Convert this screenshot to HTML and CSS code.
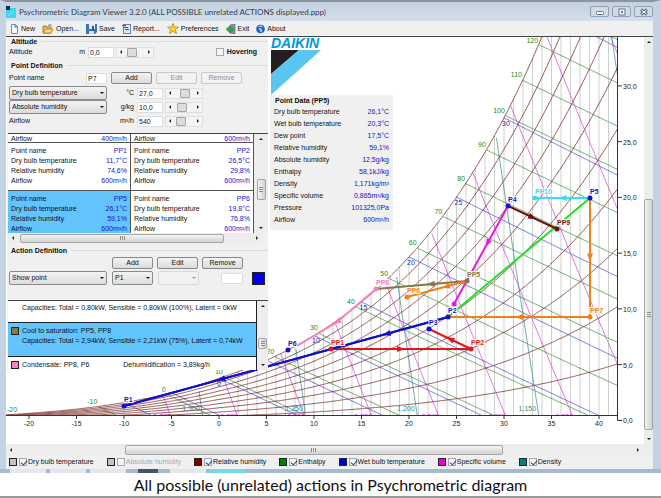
FILE: index.html
```html
<!DOCTYPE html>
<html lang="en">
<head>
  <meta charset="UTF-8">
  <meta name="viewport" content="width=device-width, initial-scale=1.0">
  <title>Psychrometric Diagram Viewer 3.2.0</title>
  <link rel="stylesheet" href="styles.css">
</head>
<body>
  <div class="window">
    <!-- Title bar -->
    <header class="titlebar">
      <svg class="app-icon" width="10" height="12" viewBox="0 0 10 12"><rect y="2" width="10" height="10" fill="#3cd8e8"/><rect width="4" height="4" fill="#0c2c4c"/><path d="M2 10L8 5" stroke="#8ef" /></svg>
      <h1>Psychrometric Diagram Viewer 3.2.0 (ALL POSSIBLE unrelated ACTIONS displayed.ppp)</h1>
      <div class="win-buttons">
        <button aria-label="Minimize"><svg width="8" height="8" viewBox="0 0 8 8"><rect x=".5" y="3.5" width="7" height="3" rx="1" fill="#fff" stroke="#67727e"/></svg></button>
        <button aria-label="Maximize"><svg width="8" height="8" viewBox="0 0 8 8"><rect x="1" y="1" width="6" height="6" fill="#fff" stroke="#67727e"/><rect x="3" y="3" width="2" height="2" fill="#67727e"/></svg></button>
        <button aria-label="Close"><svg width="8" height="8" viewBox="0 0 8 8"><path d="M1 1.500L7 6.500M7 1.500L1 6.500" stroke="#67727e" stroke-width="3"/><path d="M1.500 2L6.500 6M6.500 2L1.500 6" stroke="#fff"/></svg></button>
      </div>
    </header>

    <!-- Toolbar -->
    <nav class="toolbar">
      <button><svg width="9" height="10" viewBox="0 0 9 10"><path d="M1.500.5H5.500L7.500 2.500V9.500H1.500Z" fill="#fff" stroke="#7088b0"/><path d="M5 .5V3H8" fill="none" stroke="#48689c"/></svg>New</button>
      <button><svg width="12" height="10" viewBox="0 0 12 10"><path d="M1 9V2H4L5 3H9V9Z" fill="#e8b84c" stroke="#a8782c"/><path d="M1 9L4 5H11L9 9Z" fill="#fcdc7c" stroke="#b8883c"/><path d="M6 1.500Q8-.5 10 2" fill="none" stroke="#4c7cb4"/></svg>Open...</button>
      <button><svg width="11" height="10" viewBox="0 0 11 10"><path d="M0 0H3V5H9V0H11V8L9 10H0Z" fill="#3c74b4"/><rect x="3" y="0" width="5" height="5" fill="#e4eefa"/><rect x="3" y="7" width="5" height="3" fill="#cfe0f0"/><rect x="6" y="2" width="2" height="5" fill="#245890"/></svg>Save</button>
      <button><svg width="9" height="10" viewBox="0 0 9 10"><rect x="1.500" y=".5" width="7" height="9" fill="#dce8fa" stroke="#6c84ac"/><path d="M0 1.500H4M1.500 3.500H6M3 5.500H7" stroke="#34588c"/></svg>Report...</button>
      <button><svg width="12" height="11" viewBox="0 0 12 11"><path d="M6 .5L7.500 4L11.500 4.200L8.400 6.600L9.500 10.500L6 8.300L2.500 10.500L3.600 6.600L.5 4.200L4.500 4Z" fill="#fcd42c" stroke="#c48418" stroke-width=".8"/></svg>Preferences</button>
      <button><svg width="10" height="10" viewBox="0 0 10 10"><path d="M4 1L9 0V10L4 9Z" fill="#7c94a8" stroke="#4c6070" stroke-width=".6"/><path d="M0 5L4 2V4H7V7H4V9Z" fill="#38a848" stroke="#1c7830" stroke-width=".5"/></svg>Exit</button>
      <button><svg width="9" height="10" viewBox="0 0 9 10"><circle cx="4.500" cy="5" r="4" fill="#2468d0" stroke="#1c4c9c" stroke-width=".6"/><path d="M2 3Q4.500 0 7 3Z" fill="#a8ccf8"/><path d="M3 5H5V8" fill="none" stroke="#fff"/></svg>About</button>
    </nav>

    <main class="workspace">
      <svg class="chart" id="chart" viewBox="6 37 638 407" role="img" aria-label="Psychrometric chart"></svg>

      <div class="scroll-v">
        <span class="up"></span><span class="thumb"></span><span class="down"></span>
      </div>

      <!-- Left panel -->
      <aside class="panel">
        <h2>Altitude</h2>
        <div class="row altitude">
          <label for="altitude">Altitude</label>
          <span class="unit">m</span>
          <input type="text" id="altitude" class="num" value="0,0">
          <div class="slider"><input type="range" aria-label="Altitude slider" min="0" max="100" value="20"></div>
          <label class="hover"><input type="checkbox"> Hovering</label>
        </div>

        <h2>Point Definition</h2>
        <div class="row buttons">
          <label for="point-name">Point name</label>
          <input type="text" id="point-name" class="name" value="P7">
          <button>Add</button>
          <button disabled>Edit</button>
          <button disabled>Remove</button>
        </div>
        <div class="row">
          <span class="drop wide"><select aria-label="First property"><option>Dry bulb temperature</option></select></span>
          <label class="unit" for="dry">°C</label>
          <input type="text" id="dry" class="num" value="27,0">
          <div class="slider"><input type="range" aria-label="Temperature slider" min="0" max="100" value="62"></div>
        </div>
        <div class="row">
          <span class="drop wide"><select aria-label="Second property"><option>Absolute humidity</option></select></span>
          <label class="unit" for="abs">g/kg</label>
          <input type="text" id="abs" class="num" value="10,0">
          <div class="slider"><input type="range" aria-label="Humidity slider" min="0" max="100" value="30"></div>
        </div>
        <div class="row">
          <span class="wide">Airflow</span>
          <label class="unit" for="flow">m³/h</label>
          <input type="text" id="flow" class="num" value="540">
          <div class="slider"><input type="range" aria-label="Airflow slider" min="0" max="100" value="18"></div>
        </div>

        <div class="list points">
          <div class="cells">
            <div class="cell cut"><p>Airflow <b>400m³/h</b></p></div>
            <div class="cell cut"><p>Airflow <b>600m³/h</b></p></div>
            <div class="cell"><p>Point name <b>PP1</b></p><p>Dry bulb temperature <b>11,7°C</b></p><p>Relative humidity <b>74,6%</b></p><p>Airflow <b>600m³/h</b></p></div>
            <div class="cell"><p>Point name <b>PP2</b></p><p>Dry bulb temperature <b>26,5°C</b></p><p>Relative humidity <b>29,8%</b></p><p>Airflow <b>600m³/h</b></p></div>
            <div class="cell selected"><p>Point name <b>PP5</b></p><p>Dry bulb temperature <b>26,1°C</b></p><p>Relative humidity <b>59,1%</b></p><p>Airflow <b>600m³/h</b></p></div>
            <div class="cell"><p>Point name <b>PP6</b></p><p>Dry bulb temperature <b>19,8°C</b></p><p>Relative humidity <b>76,8%</b></p><p>Airflow <b>600m³/h</b></p></div>
          </div>
          <div class="scroll-v"><span class="up"></span><span class="thumb"></span><span class="down"></span></div>
        </div>
        <div class="scroll-h"><span class="left"></span><span class="thumb"></span><span class="right"></span></div>

        <h2>Action Definition</h2>
        <div class="row buttons actions">
          <button>Add</button>
          <button>Edit</button>
          <button>Remove</button>
        </div>
        <div class="row">
          <span class="drop wide"><select aria-label="Action"><option>Show point</option></select></span>
          <span class="drop short"><select aria-label="Point"><option>P1</option></select></span>
          <span class="drop short off"><select aria-label="Second point" disabled><option></option></select></span>
          <input type="text" class="blank" aria-label="Value">
          <button class="color" aria-label="Line colour"></button>
        </div>

        <div class="list steps">
          <div class="items">
            <div class="item first"><p>Capacities: Total = 0,80kW, Sensible = 0,80kW (100%), Latent = 0kW</p></div>
            <div class="item selected"><i class="olive"></i><p>Cool to saturation: PP5, PP8</p><p>Capacities: Total = 2,94kW, Sensible = 2,21kW (75%), Latent = 0,74kW</p></div>
            <div class="item last"><i class="pink"></i><p>Condensate: PP8, P6 <span>Dehumidification = 3,89kg/h</span></p></div>
          </div>
          <div class="scroll-v"><span class="up"></span><span class="thumb"></span><span class="down"></span></div>
        </div>
      </aside>

      <!-- Logo and point data -->
      <section class="overlay">
        <div class="logo">DAIKIN</div>
        <svg class="logo-mark" width="50" height="45" viewBox="0 0 50 45"><path d="M0 0H28L0 24Z" fill="#231f20"/><path d="M28 0H50L0 45V24Z" fill="#5bc5f2"/></svg>
        <div class="data">
          <h2>Point Data (PP5)</h2>
          <table>
            <tr><th>Dry bulb temperature</th><td>26,1°C</td></tr>
            <tr><th>Wet bulb temperature</th><td>20,3°C</td></tr>
            <tr><th>Dew point</th><td>17,5°C</td></tr>
            <tr><th>Relative humidity</th><td>59,1%</td></tr>
            <tr><th>Absolute humidity</th><td>12,5g/kg</td></tr>
            <tr><th>Enthalpy</th><td>58,1kJ/kg</td></tr>
            <tr><th>Density</th><td>1,171kg/m³</td></tr>
            <tr><th>Specific volume</th><td>0,865m³/kg</td></tr>
            <tr><th>Pressure</th><td>101325,0Pa</td></tr>
            <tr><th>Airflow</th><td>600m³/h</td></tr>
          </table>
        </div>
      </section>
    </main>

    <div class="scroll-h main-scroll"><span class="left"></span><span class="thumb"></span><span class="right"></span></div>

    <!-- Line toggles -->
    <div class="legend">
      <label><i class="silver"></i><input type="checkbox" checked>Dry bulb temperature</label>
      <label class="off"><i class="silver"></i><input type="checkbox" disabled>Absolute humidity</label>
      <label><i class="maroon"></i><input type="checkbox" checked>Relative humidity</label>
      <label><i class="green"></i><input type="checkbox" checked>Enthalpy</label>
      <label><i class="blue"></i><input type="checkbox" checked>Wet bulb temperature</label>
      <label><i class="magenta"></i><input type="checkbox" checked>Specific volume</label>
      <label><i class="teal"></i><input type="checkbox" checked>Density</label>
    </div>
  </div>

  <div class="taskbar"><span></span><span></span><span></span><span class="dark"></span><span></span><span class="cyan"></span></div>
  <p class="caption">All possible (unrelated) actions in Psychrometric diagram</p>

  <script src="chart.js"></script>
</body>
</html>
```
FILE: styles.css
```css
* {
  margin: 0;
  padding: 0;
  box-sizing: border-box;
}
body {
  background: #fff;
  color: #111;
  font-family: "Liberation Sans", Arial, sans-serif;
  font-size: 7px;
  line-height: 10px;
  border-bottom: 2px solid #9a9a9a;
}
button, input, select {
  font: inherit;
  color: inherit;
}
.window {
  background: #f0f0f0;
  border: solid #c3d3e4;
  border-width: 0 8px 0 6px;
  border-top: 2px solid #8a949e;
}

/* title bar */
.titlebar {
  display: flex;
  align-items: center;
  gap: 3px;
  height: 19px;
  background: linear-gradient(#c3d0de, #d3dfeb);
}
.titlebar h1 {
  flex: 1;
  font: 8px/12px Lato, sans-serif;
  color: #333f4c;
  white-space: nowrap;
}
.win-buttons {
  display: flex;
  gap: 3px;
}
.win-buttons button {
  display: flex;
  align-items: center;
  justify-content: center;
  width: 19px;
  height: 11px;
  background: #cfdbe8;
  border: 1px solid #8fa0b2;
  border-radius: 2px;
}

/* toolbar */
.toolbar {
  display: flex;
  gap: 7px;
  height: 15px;
  padding-left: 4px;
}
.toolbar button {
  display: flex;
  align-items: center;
  gap: 2px;
  background: none;
  border: none;
}

/* chart */
.workspace {
  position: relative;
  display: grid;
  grid-template-columns: 1fr 9px;
  border-top: 1px solid #444;
}
.chart {
  display: block;
  width: 100%;
  background: #fff;
}
.chart text {
  font-size: 7px;
}
.chart .mark {
  font-weight: bold;
  stroke: #fff;
  stroke-width: 2px;
  paint-order: stroke;
}

/* scroll bars */
.scroll-v, .scroll-h {
  display: flex;
  align-items: center;
  justify-content: space-between;
  background: #ededed;
}
.scroll-v {
  flex-direction: column;
  padding: 4px 0;
}
.scroll-h {
  height: 10px;
  padding: 0 4px;
}
.up, .down, .left, .right {
  border: 2px solid transparent;
}
.up { border-bottom-color: #222; border-top: 0; }
.down { border-top-color: #222; border-bottom: 0; }
.left { border-right-color: #222; border-left: 0; }
.right { border-left-color: #222; border-right: 0; }
.thumb {
  display: flex;
  align-items: center;
  justify-content: center;
  border: 1px solid #a5a5a5;
  border-radius: 2px;
  background: linear-gradient(#f4f4f4, #d2d2d2);
}
.thumb::after {
  content: "";
  width: 5px;
  height: 4px;
  background: repeating-linear-gradient(90deg, #888 0 1px, #eee 1px 2px);
}
.scroll-v .thumb {
  background: linear-gradient(90deg, #f4f4f4, #d0d0d0);
}
.scroll-v .thumb::after {
  width: 4px;
  height: 5px;
  background: repeating-linear-gradient(#888 0 1px, #eee 1px 2px);
}
.workspace > .scroll-v .thumb {
  width: 9px;
  height: 58%;
  margin-top: auto;
  margin-bottom: 8px;
}
.main-scroll {
  height: 11px;
  padding-right: 14px;
}
.main-scroll .thumb {
  width: 60%;
  height: 10px;
  margin-right: auto;
  margin-left: 18%;
}

/* left panel */
.panel {
  position: absolute;
  top: 0;
  left: 1px;
  width: 261px;
  background: #f0f0f0;
  padding-left: 1px;
}
h2 {
  font-size: 7px;
  line-height: 9px;
  padding-left: 3px;
}
.panel > h2 {
  display: flex;
  align-items: center;
  gap: 4px;
}
.panel > h2::after {
  content: "";
  flex: 1;
  border-top: 1px solid #ddd;
}
.row {
  display: flex;
  align-items: center;
  height: 14px;
  padding-left: 1px;
}
.altitude {
  height: 12px;
  margin-bottom: 3px;
}
.altitude label:first-child {
  width: 40px;
}
.altitude .unit {
  width: 36px;
}
.unit {
  width: 27px;
  margin-right: 3px;
  text-align: right;
}
input[type="text"] {
  height: 11px;
  border: 1px solid #ddd;
  background: #fff;
  padding-left: 1px;
}
.num {
  width: 26px;
}
.hover {
  display: flex;
  align-items: center;
  gap: 3px;
  margin-left: auto;
  margin-right: 11px;
  font-weight: bold;
}
input[type="checkbox"] {
  appearance: none;
  width: 8px;
  height: 8px;
  border: 1px solid #a4a8ac;
  background: #f6f6f6;
}
input[type="checkbox"]:checked::before {
  content: "";
  display: block;
  width: 3px;
  height: 5px;
  margin-left: 2px;
  border: solid #2c4488;
  border-width: 0 1px 1px 0;
  transform: rotate(40deg);
}
.slider {
  display: flex;
  align-items: center;
  width: 38px;
  height: 11px;
  margin-left: 2px;
  border: 1px solid #e0e0e0;
  background: #f4f4f4;
}
.slider::before, .slider::after {
  content: "";
  border: 2px solid transparent;
  margin: 0 3px;
}
.slider::before { border-right-color: #222; border-left: 0; }
.slider::after { border-left-color: #222; border-right: 0; }
.slider input {
  appearance: none;
  flex: 1;
  min-width: 0;
  background: none;
}
.slider input::-webkit-slider-thumb {
  appearance: none;
  width: 10px;
  height: 9px;
  border: 1px solid #a5a5a5;
  border-radius: 1px;
  background: #ddd;
}
.buttons {
  gap: 4px;
  height: 16px;
}
.buttons label {
  width: 73px;
}
.buttons .name {
  width: 21px;
}
.buttons button {
  width: 41px;
  height: 12px;
  line-height: 10px;
  border: 1px solid #8a8a8a;
  border-radius: 2px;
  background: linear-gradient(#f3f3f3, #dcdcdc);
}
.buttons button:disabled {
  border-color: #c8c8c8;
  background: #f2f2f2;
  color: #909090;
}
.actions {
  padding-left: 104px;
}
.wide {
  width: 98px;
}
.drop {
  position: relative;
  height: 14px;
}
.drop select {
  appearance: none;
  display: block;
  width: 100%;
  height: 14px;
  padding-left: 2px;
  border: 1px solid #8a8a8a;
  border-radius: 2px;
  background: linear-gradient(#f3f3f3, #dcdcdc);
}
.drop::after {
  content: "";
  position: absolute;
  right: 3px;
  top: 6px;
  border: 2px solid transparent;
  border-top-color: #111;
  border-bottom: 0;
}
.drop.off select {
  border-color: #d0d0d0;
  background: #f2f2f2;
}
.drop.off::after {
  border-top-color: #999;
}
.short {
  width: 41px;
  margin-left: 5px;
}
.blank {
  width: 22px;
  margin-left: auto;
}
.color {
  width: 13px;
  height: 13px;
  margin: 0 3px 0 9px;
  border: 1px solid #222;
  background: #0000e8;
}

/* lists */
.list {
  display: flex;
  border-top: 1px solid #444;
}
.list .scroll-v {
  flex: 1;
}
.list .thumb {
  width: 9px;
  height: 21px;
}
.points {
  height: 100px;
  margin-top: 5px;
}
.points .thumb {
  margin-top: 12px;
}
.cells {
  display: grid;
  grid-template-columns: 123px 123px;
  grid-template-rows: 9px 48px 42px;
  overflow: hidden;
}
.cell {
  padding: 3px 3px 0;
  border-right: 1px solid #555;
  border-bottom: 1px solid #555;
  background: #fff;
  overflow: hidden;
}
.cell:nth-last-child(-n+2) {
  border-bottom: none;
}
.cell p {
  display: flex;
  justify-content: space-between;
}
.cell.cut {
  display: grid;
  align-items: end;
  padding: 0 3px;
}
.cell b {
  font-weight: normal;
  color: #1414c8;
}
.selected {
  background: #63c3fb;
}
.panel .scroll-h .thumb {
  width: 204px;
  height: 9px;
  margin-right: auto;
  margin-left: 6px;
}
.panel .scroll-h {
  margin-bottom: 3px;
  margin-right: 6px;
}
.steps {
  height: 70px;
  margin-top: 15px;
}
.steps .thumb {
  height: 11px;
  margin-top: 16px;
}
.items {
  width: 249px;
  border-right: 1px solid #222;
  background: #fff;
}
.item {
  position: relative;
  padding: 3px 0 0 14px;
  height: 34px;
  border-bottom: 1px solid #222;
}
.item.first {
  height: 22px;
  padding-top: 2px;
}
.item.last {
  height: 13px;
  border: none;
}
.item p {
  white-space: nowrap;
}
.item span {
  margin-left: 32px;
}
.item i {
  position: absolute;
  left: 3px;
  top: 4px;
}
i {
  width: 8px;
  height: 8px;
  border: 1px solid #222;
}
.olive { background: #808040; }
.pink { background: #ff80c0; }
.silver { background: #c4c4c4; }
.maroon { background: #800000; }
.green { background: #008000; }
.blue { background: #0000e0; }
.magenta { background: #f000e0; }
.teal { background: #008080; }

/* logo and point data */
.overlay {
  position: absolute;
  top: 0;
  left: 264px;
  width: 123px;
}
.logo {
  padding-left: 1px;
  font: italic bold 14px/13px "Liberation Sans", sans-serif;
  color: #0097e0;
}
.logo-mark {
  display: block;
  margin-left: 1px;
}
.data {
  padding: 1px 4px 4px;
  background: #f0f0f0;
}
.data h2 {
  padding: 0 0 1px 1px;
}
.data table {
  width: 100%;
  border-collapse: collapse;
}
.data th {
  font-weight: normal;
  text-align: left;
}
.data td {
  height: 12px;
  text-align: right;
  color: #1414c8;
}

/* legend */
.legend {
  display: flex;
  align-items: center;
  gap: 13px;
  height: 14px;
  padding-left: 3px;
}
.legend label {
  display: flex;
  align-items: center;
  white-space: nowrap;
}
.legend input {
  margin: 0 1px 0 2px;
}
.legend .off {
  color: #aaa;
}

.taskbar {
  display: flex;
  gap: 4px;
  height: 4px;
  padding-left: 10px;
  background: #a3bad2;
}
.taskbar span {
  width: 36px;
  background: #e4e8ec;
}
.taskbar .dark {
  width: 20px;
  margin: 0 8px;
  background: #4a5460;
}
.taskbar .cyan {
  background: #70dcec;
}
.caption {
  font: 16px/23px Lato, sans-serif;
  color: #111;
  text-align: center;
}
```
FILE: chart.js
```js
const svg = document.getElementById('chart');
const P = 101325;
const RIGHT = 42;

const X = t => 219 + 9.5 * t;
const Y = w => 420.4 - 11.15 * w;

function add(tag, attrs, text) {
  const el = document.createElementNS('http://www.w3.org/2000/svg', tag);
  for (const k in attrs) el.setAttribute(k, attrs[k]);
  if (text) el.textContent = text;
  (add.parent || svg).appendChild(el);
  return el;
}

function label(x, y, text, fill, cls, anchor) {
  if (y < 38 || x > 630) return;
  add('text', { x, y: Math.max(y, 43), fill, class: cls || '', 'text-anchor': anchor || 'start' }, text);
}

// saturation pressure over water and ice
function pws(t) {
  return t >= 0 ? 610.94 * Math.exp(17.625 * t / (t + 243.04))
                : 611.2 * Math.exp(22.46 * t / (t + 272.62));
}
// absolute humidity in g/kg
function hum(t, rh) {
  const p = pws(t) * rh;
  return 622 * p / (P - p);
}

// draws w = fn(t) wherever it lies under the saturation curve
function curve(fn, color, from, width) {
  let d = '';
  let start = null;
  for (let t = from; t <= RIGHT + 0.001; t += 0.1) {
    const w = fn(t);
    if (w > hum(t, 1) * 1.001 || w < 0) continue;
    if (!start) start = [X(t), Y(w)];
    d += (d ? 'L' : 'M') + X(t).toFixed(1) + ' ' + Y(w).toFixed(1);
  }
  if (d) add('path', { d, fill: 'none', stroke: color, 'stroke-width': width || 0.7 });
  return start;
}

const clip = add('clipPath', { id: 'area' });
add.parent = clip;
add('rect', { x: 6, y: 37, width: 612, height: 379 });
add.parent = null;
const grid = add('g', { 'clip-path': 'url(#area)' });
add.parent = grid;

// dry bulb
for (let t = 2; t <= RIGHT; t++) {
  add('path', { d: `M${X(t)} 416V${Y(hum(t, 1))}`, stroke: '#b4beb4', 'stroke-width': 0.7 });
}
// enthalpy
for (let h = -10; h <= 130; h += 10) {
  const s = curve(t => (h - 1.006 * t) / (2.501 + 0.00186 * t) + 0.1, '#2a8a2a', -22);
  if (s) label(s[0] - 1, s[1] - 3, String(h), '#1c8a1c', '', 'end');
}
label(7, 412, '-20', '#1c8a1c');
// wet bulb
for (let b = -10; b <= 35; b += 5) {
  const ws = hum(b, 1) / 1000;
  const s = curve(t => 1000 * ((2501 - 2.326 * b) * ws - 1.006 * (t - b)) / (2501 + 1.86 * t - 4.186 * b), '#3c3cd0', b);
  if (s && b >= 0) label(s[0] - 2, s[1] + 8, String(b), '#2424d0');
}
// specific volume
for (let v = 0.76; v < 0.97; v += 0.02) {
  curve(t => 1000 * (v * 101.325 / (0.2871 * (t + 273.15)) - 1) / 1.6078, '#d838d8', -12);
  const foot = X(v * 101.325 / 0.2871 - 273.15);
  if (foot < 600) label(foot - 19, 419, v.toFixed(3).replace('.', ','), '#d838d8');
}
// density
for (let r = 1.1; r < 1.32; r += 0.05) {
  curve(t => {
    const k = 101.325 / (0.2871 * (t + 273.15));
    return 1000 * (k - r) / (1.6078 * r - k);
  }, '#2c8c8c', -12);
  const foot = X(101.325 / (0.2871 * r) - 273.15);
  if (foot < 600) label(foot - 21, 411, r.toFixed(3).replace('.', ','), '#2c8c8c');
}
// relative humidity
for (let rh = 1; rh <= 10; rh++) {
  curve(t => hum(t, rh / 10), '#7c2c2c', -23, 0.8);
}
add.parent = null;

// axes
add('path', { d: 'M6 415.5H617.500M617.500 37V420.500H622', fill: 'none', stroke: '#333' });
add('path', { d: 'M6 415.5H215', stroke: '#801818' });
for (let t = -20; t <= 40; t += 5) {
  add('path', { d: `M${X(t)} 416v3`, stroke: '#333' });
  label(X(t), 426, String(t), '#222', '', 'middle');
}
for (let w = 0; w <= 30; w += 5) {
  add('path', { d: `M618 ${Y(w)}h4`, stroke: '#333' });
  label(623, Y(w) + 3, w + ',0', '#222');
}

// actions: points, colour, position of the arrow head along the last leg
const actions = [
  [[[590, 198], [448, 317]], '#20e020', null],
  [[[590, 317], [448, 317]], '#f08018', 0.5],
  [[[590, 198], [590, 317]], '#f08018', 0.5],
  [[[376, 289], [337, 322], [297, 346]], '#f880b8', 0],
  [[[467, 281], [376, 289]], '#807848', 0.4],
  [[[467, 281], [407, 297]], '#f08018', 0.35],
  [[[508, 206], [454, 304]], '#e818e0', 0.38],
  [[[508, 206], [557, 229]], '#701010', 0.5],
  [[[590, 198], [535, 198]], '#30e0f0', 0.5],
  [[[471, 349], [429, 329]], '#e01818', 0.5],
  [[[331, 349], [471, 349]], '#e01818', 0.5],
  [[[448, 317], [124, 406]], '#1010d0', 0.19],
  [[[448, 317], [124, 406]], '#1010d0', 0.7]
];
for (const [pts, color, at] of actions) {
  add('path', { d: 'M' + pts.join('L'), fill: 'none', stroke: color, 'stroke-width': 2 });
  if (at === null) continue;
  const [a, b] = pts.slice(-2);
  const x = a[0] + (b[0] - a[0]) * at;
  const y = a[1] + (b[1] - a[1]) * at;
  const deg = Math.atan2(b[1] - a[1], b[0] - a[0]) * 180 / Math.PI;
  add('path', { d: 'M-4-3L4 0L-4 3Z', fill: color, transform: `translate(${x} ${y}) rotate(${deg})` });
}

const points = [
  ['P1', 124, 406, '#1010d0'], ['P2', 448, 317, '#1010d0'], ['P3', 429, 329, '#1010d0'],
  ['P4', 508, 206, '#1010d0'], ['P5', 590, 198, '#1010d0'], ['P6', 288, 350, '#1010d0'],
  ['PP1', 331, 349, '#e01818'], ['PP2', 471, 349, '#e01818'], ['PP5', 467, 281, '#807848'],
  ['PP6', 407, 297, '#f08018'], ['PP7', 590, 317, '#f08018'], ['PP8', 376, 289, '#f880b8'],
  ['PP9', 557, 229, '#701010'], ['PP10', 535, 198, '#30e0f0']
];
for (const [name, x, y, color] of points) {
  label(x, y - 4, name, color, 'mark');
  add('circle', { cx: x, cy: y, r: 2.5, fill: color });
}
add('circle', { cx: 454, cy: 304, r: 2.5, fill: '#e818e0' });
```
